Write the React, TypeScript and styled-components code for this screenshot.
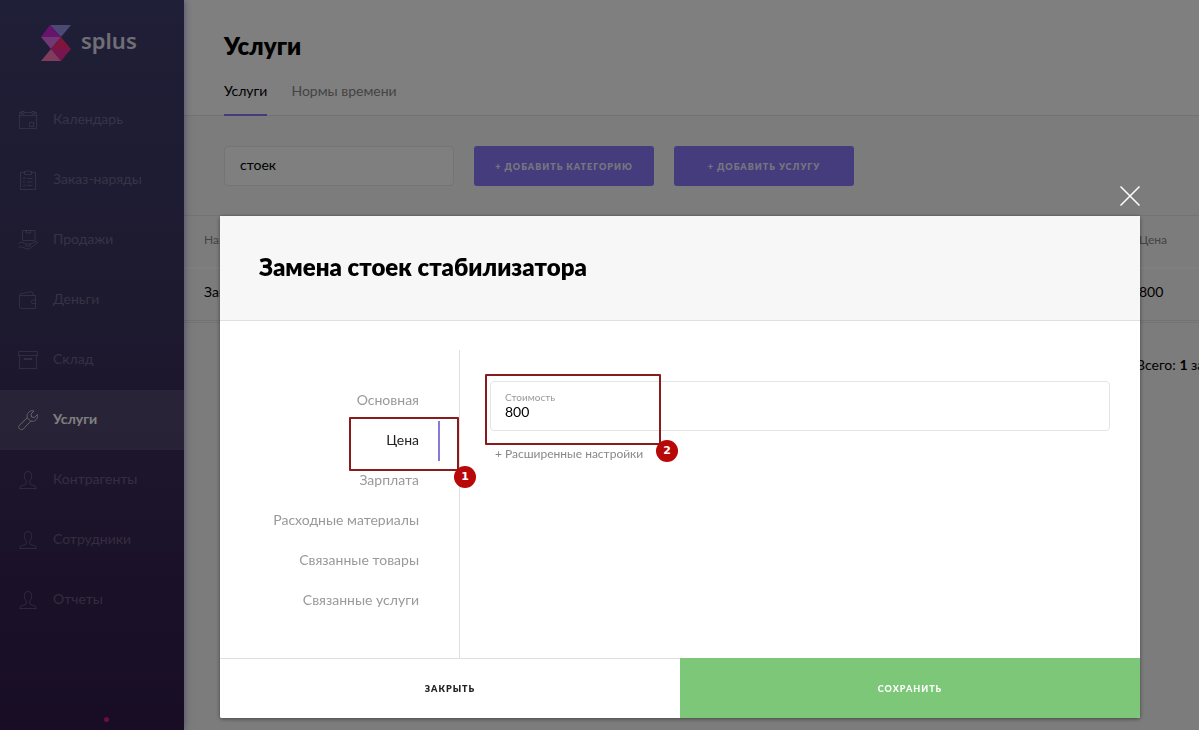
import React from "react";
import styled, { createGlobalStyle } from "styled-components";

const GlobalStyle = createGlobalStyle`
  * { box-sizing: border-box; }
  body { margin: 0; background: #fff; }
  body, button, input { font-family: Lato, "Noto Sans", sans-serif; font-size: 14px; color: #000; }
`;

const Page = styled.div`
  display: flex;
  min-height: 100vh;
  overflow: hidden;
  line-height: 20px;
`;

const Sidebar = styled.aside`
  position: relative;
  display: flex;
  flex-direction: column;
  flex: 0 0 184px;
  background: linear-gradient(180deg, #3e3e6e 0%, #3c3662 35%, #382856 70%, #301a4a 100%);
  box-shadow: 0 0 8px rgba(64, 44, 160, 0.5);
`;

const Logo = styled.a`
  display: flex;
  gap: 10px;
  height: 90px;
  padding: 24px 0 0 41px;
  color: #e0deea;
  font: 600 22px/32px "Noto Sans", sans-serif;
  text-decoration: none;
`;

const MenuLink = styled.a<{ $active?: boolean }>`
  display: flex;
  align-items: center;
  gap: 15px;
  height: 60px;
  padding-left: 18px;
  text-decoration: none;
  font-weight: ${(p) => (p.$active ? 700 : 400)};
  color: ${(p) => (p.$active ? "#fff" : "rgba(255, 255, 255, 0.25)")};
  background: ${(p) => (p.$active ? "rgba(255, 255, 255, 0.12)" : "none")};

  svg {
    flex: none;
    opacity: ${(p) => (p.$active ? 0.7 : 0.8)};
  }
`;

const MenuLabel = styled.span`
  padding-bottom: 2px;
`;

const StatusDot = styled.span`
  width: 5px;
  height: 5px;
  margin: auto 0 8px 104px;
  border-radius: 50%;
  background: #d81880;
`;

const Main = styled.main`
  flex: 1;
  min-width: 0;
  background: #f8f8f8;
`;

const PageHeader = styled.header`
  padding: 30px 40px 0;
  background: #fff;
  border-bottom: 1px solid #e4e4e4;
`;

const Title = styled.h1`
  margin: 0;
  font-size: 24px;
  line-height: 32px;
  font-weight: 800;
`;

const Tabs = styled.nav`
  display: flex;
  gap: 24px;
  padding-top: 19px;
`;

const Tab = styled.a<{ $active?: boolean }>`
  height: 35px;
  margin-bottom: -1px;
  text-decoration: none;
  color: ${(p) => (p.$active ? "#000" : "#888")};
  border-bottom: 2px solid ${(p) => (p.$active ? "#8878f8" : "transparent")};
`;

const Toolbar = styled.div`
  display: flex;
  gap: 20px;
  padding: 30px 40px 29px;
`;

const Search = styled.input`
  width: 230px;
  height: 40px;
  padding: 0 15px 4px;
  background: #fff;
  border: 1px solid #e8e8e8;
  border-radius: 4px;
`;

const AddButton = styled.button`
  width: 180px;
  height: 40px;
  border: 0;
  border-radius: 3px;
  background: #8878f8;
  color: rgba(255, 255, 255, 0.85);
  font-size: 9px;
  font-weight: 800;
  letter-spacing: 1px;
  text-transform: uppercase;
`;

const Services = styled.table`
  width: 100%;
  table-layout: fixed;
  border-collapse: collapse;
  border-top: 1px solid #e6e6e6;
  border-bottom: 3px double #e6e6e6;
  text-align: left;

  th {
    height: 52px;
    padding: 0 0 2px;
    font-size: 12px;
    font-weight: 400;
    color: #888;
    border-bottom: 2px solid #fff;
  }
  td {
    height: 54px;
    padding: 0 0 4px;
  }
  th, td { overflow: hidden; white-space: nowrap; }
  th:first-child, td:first-child { padding-left: 20px; }
  th:last-child, td:last-child { width: 60px; }
`;

const Total = styled.p`
  width: 63px;
  margin: 32px 0 0 auto;
  overflow: hidden;
  white-space: nowrap;
`;

const Overlay = styled.div`
  position: fixed;
  inset: 0;
  padding: 216px 59px 12px 220px;
  overflow: auto;
  background: rgba(0, 0, 0, 0.5);
`;

const Dialog = styled.form`
  position: relative;
  display: flex;
  flex-direction: column;
  min-height: 100%;
  line-height: 20px;
  background: #fff;
  border-radius: 2px;
  box-shadow: 0 1px 4px rgba(0, 0, 0, 0.45);
`;

const CloseButton = styled.button`
  position: absolute;
  top: -30px;
  right: 0;
  display: flex;
  padding: 0;
  border: 0;
  background: none;
`;

const DialogHeader = styled.header`
  padding: 35px 39px 37px;
  background: #f7f7f7;
  border-bottom: 1px solid #e0e0e0;
`;

const DialogBody = styled.div`
  display: flex;
  flex: 1;
  padding-top: 29px;
`;

const Sections = styled.nav`
  flex: 0 0 240px;
  padding-top: 30px;
  border-right: 1px solid #e0e0e0;
`;

const SectionLink = styled.a<{ $active?: boolean }>`
  position: relative;
  display: block;
  padding: 10px 40px 10px 0;
  text-align: right;
  text-decoration: none;
  color: ${(p) => (p.$active ? "#222" : "#999")};

  &::after {
    content: "";
    position: absolute;
    top: 1px;
    bottom: -1px;
    right: 19px;
    width: 2px;
    background: ${(p) => (p.$active ? "#8878d8" : "none")};
  }
`;

const Content = styled.div`
  position: relative;
  flex: 1;
  padding: 31px 30px 0;
`;

const Field = styled.label`
  display: flex;
  flex-direction: column;
  height: 50px;
  padding: 8px 14px 0;
  border: 1px solid #e4e4e4;
  border-radius: 4px;
  color: #999;
  font-size: 10px;
  line-height: 14px;
`;

const FieldInput = styled.input`
  width: 100%;
  height: 14px;
  padding: 0;
  border: 0;
  outline: 0;
  background: none;
`;

const MoreButton = styled.button`
  display: block;
  margin-top: 13px;
  padding: 0 5px;
  border: 0;
  background: none;
  color: #888;
  font-size: 12px;
  line-height: 20px;
`;

const Callout = styled.span`
  position: absolute;
  border: 2px solid #8a1a1c;
  border-radius: 1px;
  pointer-events: none;
`;

const SectionCallout = styled(Callout)`
  top: -3px;
  right: 0;
  width: 110px;
  height: 54px;
`;

const FieldCallout = styled(Callout)`
  top: 24px;
  left: 25px;
  width: 176px;
  height: 71px;
`;

const Step = styled.b`
  position: absolute;
  right: -19px;
  bottom: -19px;
  width: 22px;
  height: 22px;
  border-radius: 50%;
  background: #b80808;
  color: #fff;
  font: 700 11px/22px "DejaVu Sans", sans-serif;
  text-align: center;
`;

const Actions = styled.footer`
  display: flex;
  height: 60px;
`;

const Action = styled.button<{ $primary?: boolean }>`
  flex: 1;
  border: 0;
  border-top: 1px solid ${(p) => (p.$primary ? "#7cc878" : "#e0e0e0")};
  background: ${(p) => (p.$primary ? "#7cc878" : "#fff")};
  color: ${(p) => (p.$primary ? "#fff" : "#222")};
  border-radius: ${(p) => (p.$primary ? "0 0 2px 0" : "0 0 0 2px")};
  font-size: 9px;
  font-weight: ${(p) => (p.$primary ? 900 : 800)};
  letter-spacing: 1px;
  text-transform: uppercase;
`;

const icons: Record<string, React.ReactNode> = {
  calendar: (
    <>
      <path d="M3.500 2.500h-2v16h17v-16h-2M6.500 2.500h7M1.500 5.500h17" />
      <path d="M3.500 1.500h2.500v2.500h-2.500zM14 1.500h2.500v2.500h-2.500zM11.500 12.500h4v4h-4z" />
    </>
  ),
  orders: (
    <>
      <path d="M6.500 2.500h-4v17h15v-17h-4M6.500 1.500h2l1.500-1 1.500 1h2v3h-7z" />
      <path d="M5 8l1 1 1.500-2M9 8.500h5.500M5 12h2M9 12h5.500M5 15.500l1 1 1.500-2M9 15.500h5.500" />
    </>
  ),
  sales: (
    <>
      <path d="M4.500 10V.5h12.500V10M8.500.5V3h4V.5M4.500 10.500h12.500" />
      <path d="M.5 13.500c3-2 5-.5 7 .5h4c1.500 0 1.500 2 0 2H7M12 14l6-2.500c1.500-.4 2 .8 1 1.500l-6.500 5c-1.500 1-3 1.500-5 .5l-3-1.500H.5" />
    </>
  ),
  wallet: (
    <>
      <path d="M2 5.500h15.500V18.500H3.500c-1.200 0-2-.8-2-2V5.500c0-1 .7-1.500 1.500-1.700L14 1.500l1.500 4" />
      <path d="M17.500 10h-2.500c-2.500 0-2.500 3.500 0 3.500h2.500" />
    </>
  ),
  storage: (
    <>
      <path d="M.5 1.500h19v4H.5zM1.500 5.500v13h17v-13" />
      <path d="M6 8.500h8v1H6z" />
    </>
  ),
  wrench: (
    <path d="M1.200 15.500l8-7.700C8.500 5 10 1.500 13.500.8c1-.2 1.800 0 2.500.2l-3 3 .5 3 3 .5 3-3c.7 3-1 6-4 6.700-1 .2-1.800.1-2.600-.2l-7.600 8c-2.700 2-5.800-1-4.100-3.500zM9.200 7.800l3.500 3.300" />
  ),
  person: (
    <path d="M10 1.500c-2.500 0-3.700 1.800-3.700 4.200 0 2.300.7 4 1.900 5v3c0 1.300-5.200 1.300-6.200 3.300-.2.500-.2 1-.2 1.500h16.400c0-.5 0-1-.2-1.500-1-2-6.200-2-6.200-3.300v-3c1.200-1 1.900-2.700 1.900-5 0-2.400-1.200-4.200-3.700-4.200z" />
  ),
};

const Icon = ({ name }: { name: string }) => (
  <svg width="20" height="20" viewBox="0 0 20 20" fill="none" stroke="currentColor" strokeWidth="1" strokeLinejoin="round" aria-hidden="true">
    {icons[name]}
  </svg>
);

const menu = [
  { label: "Календарь", icon: "calendar" },
  { label: "Заказ-наряды", icon: "orders" },
  { label: "Продажи", icon: "sales" },
  { label: "Деньги", icon: "wallet" },
  { label: "Склад", icon: "storage" },
  { label: "Услуги", icon: "wrench", active: true },
  { label: "Контрагенты", icon: "person" },
  { label: "Сотрудники", icon: "person" },
  { label: "Отчеты", icon: "person" },
];

const sections = ["Основная", "Цена", "Зарплата", "Расходные материалы", "Связанные товары", "Связанные услуги"];

export default function App() {
  return (
    <>
      <GlobalStyle />
      <Page>
        <Sidebar>
          <Logo href="#">
            <svg width="30" height="37" viewBox="0 0 30 37" aria-hidden="true">
              <path fill="#9494e8" d="M9 1h21L20 13z" />
              <path fill="#d028d8" d="M9 1l11 12H0z" />
              <path fill="#e070e8" d="M0 13h20L10 25z" />
              <path fill="#ff2878" d="M20 13l10 12H10z" />
              <path fill="#f028a0" d="M10 25h20L20 37z" />
              <path fill="#ff78b8" d="M10 25l10 12H0z" />
            </svg>
            <span>splus</span>
          </Logo>
          <nav>
            {menu.map((m) => (
              <MenuLink key={m.label} href="#" $active={m.active}>
                <Icon name={m.icon} />
                <MenuLabel>{m.label}</MenuLabel>
              </MenuLink>
            ))}
          </nav>
          <StatusDot />
        </Sidebar>
        <Main>
          <PageHeader>
            <Title>Услуги</Title>
            <Tabs>
              <Tab href="#" $active>Услуги</Tab>
              <Tab href="#">Нормы времени</Tab>
            </Tabs>
          </PageHeader>
          <Toolbar>
            <Search aria-label="Поиск" defaultValue="стоек" />
            <AddButton type="button">+ Добавить категорию</AddButton>
            <AddButton type="button">+ Добавить услугу</AddButton>
          </Toolbar>
          <Services>
            <thead>
              <tr><th>Название</th><th>Цена</th></tr>
            </thead>
            <tbody>
              <tr><td>Замена стоек стабилизатора</td><td>800</td></tr>
            </tbody>
          </Services>
          <Total>Всего: <b>1</b> запись</Total>
        </Main>
      </Page>
      <Overlay>
        <Dialog role="dialog" aria-labelledby="dialog-title" onSubmit={(e) => e.preventDefault()}>
          <CloseButton type="button" aria-label="Закрыть окно">
            <svg width="20" height="20" viewBox="0 0 20 20" stroke="#fff" strokeWidth="1.500">
              <path d="M.5.5l19 19M19.500.5l-19 19" />
            </svg>
          </CloseButton>
          <DialogHeader>
            <Title as="h2" id="dialog-title">Замена стоек стабилизатора</Title>
          </DialogHeader>
          <DialogBody>
            <Sections>
              {sections.map((s) => (
                <SectionLink key={s} href="#" $active={s === "Цена"}>
                  {s}
                  {s === "Цена" && <SectionCallout><Step>1</Step></SectionCallout>}
                </SectionLink>
              ))}
            </Sections>
            <Content>
              <Field>
                Стоимость
                <FieldInput defaultValue="800" />
              </Field>
              <MoreButton type="button">+ Расширенные настройки</MoreButton>
              <FieldCallout><Step>2</Step></FieldCallout>
            </Content>
          </DialogBody>
          <Actions>
            <Action type="button">Закрыть</Action>
            <Action type="submit" $primary>Сохранить</Action>
          </Actions>
        </Dialog>
      </Overlay>
    </>
  );
}
